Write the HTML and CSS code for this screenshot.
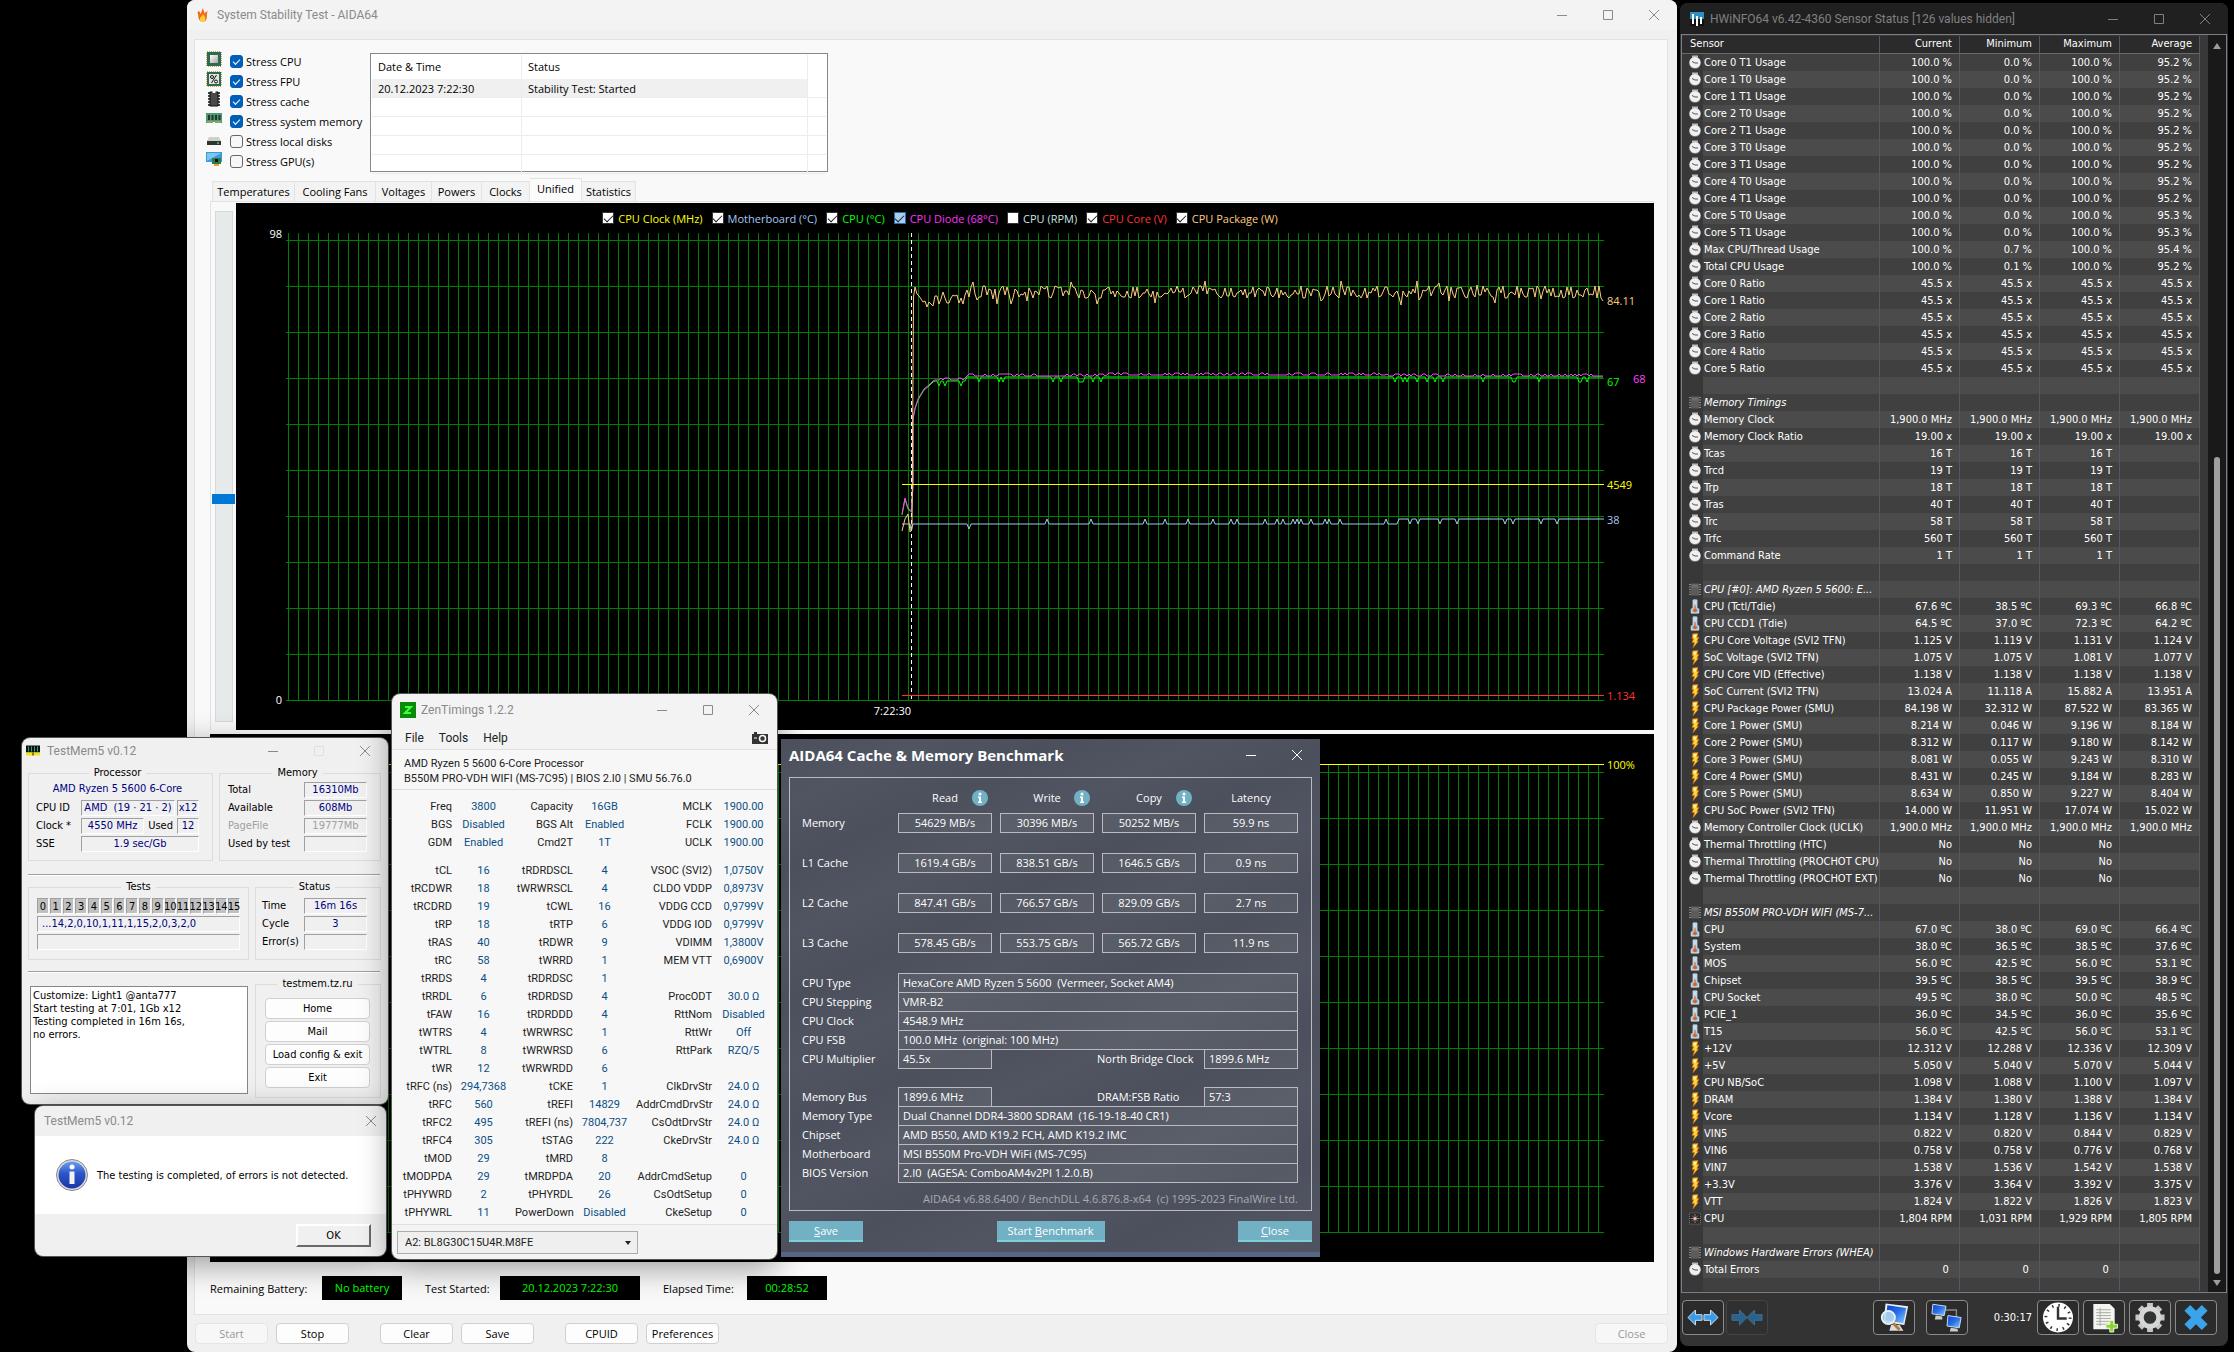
FILE: index.html
```html
<!DOCTYPE html>
<html lang="en">
<head>
  <meta charset="UTF-8" />
  <title>Stability test desktop</title>
  <link rel="stylesheet" href="styles.css">
</head>
<body>

  <!-- shared icons -->
  <svg class="defs" aria-hidden="true">
    <defs>
      <linearGradient id="screen" x1="0" y1="0" x2="1" y2="1">
        <stop offset="0" stop-color="#0a3fd0"/><stop offset="0.5" stop-color="#2a6fe8"/><stop offset="1" stop-color="#8fd0ff"/>
      </linearGradient>
      <linearGradient id="ball" x1="0" y1="0" x2="0" y2="1">
        <stop offset="0" stop-color="#6f9df0"/><stop offset="0.45" stop-color="#2a56c8"/><stop offset="1" stop-color="#1c35a8"/>
      </linearGradient>
      <linearGradient id="chipface" x1="0" y1="0" x2="1" y2="1">
        <stop offset="0" stop-color="#ffffff"/><stop offset="1" stop-color="#a9a9a9"/>
      </linearGradient>
    </defs>
    <symbol id="i-min" viewBox="0 0 10 10"><path d="M0 5.5h10" stroke="currentColor"/></symbol>
    <symbol id="i-max" viewBox="0 0 10 10"><path d="M.5.5h9v9h-9z" fill="none" stroke="currentColor"/></symbol>
    <symbol id="i-close" viewBox="0 0 10 10"><path d="M0 0l10 10M10 0L0 10" stroke="currentColor"/></symbol>
    <symbol id="i-clock" viewBox="0 0 12 14">
      <path d="M3 0h6v3H3z" fill="#bbb"/>
      <circle cx="6" cy="7.500" r="6" fill="#777"/><circle cx="6" cy="7" r="5.500" fill="#f0f0f0"/>
      <path d="M3 6l3 1.500h3" stroke="#555" fill="none"/>
    </symbol>
    <symbol id="i-chip" viewBox="0 0 12 14">
      <path d="M0 2h12M0 4.500h12M0 7h12M0 9.500h12M0 12h12" stroke="#8a8a8a"/>
      <path d="M2 1h8v12H2z" fill="#5c5c5c"/><path d="M3 2h6v3H3z" fill="#6e6e6e"/>
    </symbol>
    <symbol id="i-temp" viewBox="0 0 10 16">
      <path d="M3 1h4v8l2 2v4H1v-4l2-2z" fill="#8fc3e6" stroke="#dceef9"/>
      <path d="M4.500 2h1v6h-1z" fill="#fff"/><path d="M4.500 6h1v4h-1z" fill="#e3571b"/><circle cx="5" cy="12" r="2" fill="#ee5a12"/>
    </symbol>
    <symbol id="i-bolt" viewBox="1 0 10 16">
      <path d="M3.500 1L9 .5 8 5l2-.500-2 4.500h1.500L4 15.500 5.500 10H3l1.500-4H3z" fill="#ffd633" stroke="#d9731a" stroke-width=".8"/>
      <path d="M4.500 2h3l-1.500 4z" fill="#fff6c4"/>
    </symbol>
    <symbol id="i-fan" viewBox="0 0 12 12">
      <path d="M.5.5h11v11H.5z" fill="#2b2626" stroke="#777" stroke-dasharray="1 1"/>
      <path d="M6 1.500v9M1.500 6h9M3 3l6 6M9 3l-6 6" stroke="#8d7f7f"/><circle cx="6" cy="6" r="1.500" fill="#fbb"/>
    </symbol>
    <symbol id="i-info" viewBox="0 0 16 16">
      <circle cx="8" cy="8" r="8" fill="#72b1c4"/><circle cx="8" cy="4" r="1.500" fill="#fff"/>
      <path d="M6 6.500h3v5h1v1.500H6v-1.500h1V8H6z" fill="#fff"/>
    </symbol>
  </svg>

  <main class="desktop">

    <!-- AIDA64 System Stability Test -->
    <section class="aida">
      <header class="titlebar">
        <svg class="app-icon" viewBox="0 0 16 18"><path d="M2 4c2 1 3 2 3 4C6 6 6 3 8 0c0 3 2 4 2 7 1-1 2-2 4-3-1 2-1 4-1 7 0 4-2 7-5 7S2 15 2 11C2 8 1 7 1 6z" fill="#f26a1b"/><path d="M8 8c2 2 3 4 3 6s-1 4-3 4-4-2-4-4 2-3 4-6z" fill="#ffd02e"/></svg>
        <h1>System Stability Test - AIDA64</h1>
        <div class="win-buttons">
          <button aria-label="Minimize"><svg><use href="#i-min"/></svg></button>
          <button aria-label="Maximize"><svg><use href="#i-max"/></svg></button>
          <button aria-label="Close"><svg><use href="#i-close"/></svg></button>
        </div>
      </header>

      <div class="aida-panel">
        <div class="aida-top">
          <div class="stress">
            <label><svg viewBox="0 0 16 16"><path d="M1 1h14v14H1z" fill="none" stroke="#c5a75a" stroke-width="2" stroke-dasharray="1 1"/><path d="M1 1h14v14H1z" fill="#2f6b4f"/><path d="M4 4h8v8H4z" fill="url(#chipface)"/></svg><input type="checkbox" checked>Stress CPU</label>
            <label><svg viewBox="0 0 16 16"><path d="M1 1h14v14H1z" fill="none" stroke="#c5a75a" stroke-width="2" stroke-dasharray="1 1"/><path d="M1 1h14v14H1z" fill="#2f6b4f"/><path d="M3 3h10v10H3z" fill="#e4e4e4"/><circle cx="6" cy="6" r="1.500" fill="none" stroke="#111"/><circle cx="10" cy="10.500" r="1.500" fill="none" stroke="#111"/><path d="M10.500 4l-5 8" stroke="#111"/></svg><input type="checkbox" checked>Stress FPU</label>
            <label><svg viewBox="0 0 16 16"><path d="M2 2h12M2 5h12M2 8h12M2 11h12M2 14h12" stroke="#111" stroke-width="1.500"/><path d="M4 1h8v14H4z" fill="#4a4a4a" stroke="#111"/><path d="M6.500 0h3v2h-3z" fill="#f9f9f9"/></svg><input type="checkbox" checked>Stress cache</label>
            <label><svg viewBox="0 0 16 16"><path d="M0 2h16v10h-7v-1H7v1H0z" fill="#4f9a72"/><path d="M2 4h2v5H2zM5.500 4h2v5h-2zM9 4h2v5H9zM12.500 4h2v5h-2z" fill="#24352c"/><path d="M1 11h6M9 11h6" stroke="#c9b458"/></svg><input type="checkbox" checked>Stress system memory</label>
            <label><svg viewBox="0 0 16 16"><path d="M3 6h10l2 4H1z" fill="#cfcfcf"/><path d="M1 10h14v4H1z" fill="#333"/><path d="M11 12h2" stroke="#3be04a" stroke-width="1.500"/></svg><input type="checkbox">Stress local disks</label>
            <label><svg viewBox="0 0 16 16"><path d="M0 1h16v10H0z" fill="#3a9bdc"/><path d="M1 2h14L1 10z" fill="#7cc6f2"/><path d="M6 7h9v6H6z" fill="#2f7a4a"/><path d="M9 8h3v3H9z" fill="#111"/><path d="M8 13h5v2H8z" fill="#e8a51e"/></svg><input type="checkbox">Stress GPU(s)</label>
          </div>
          <div class="log">
            <table>
              <thead><tr><th>Date &amp; Time</th><th>Status</th><th></th></tr></thead>
              <tbody>
                <tr class="selected"><td>20.12.2023 7:22:30</td><td>Stability Test: Started</td><td></td></tr>
                <tr><td></td><td></td><td></td></tr>
                <tr><td></td><td></td><td></td></tr>
                <tr><td></td><td></td><td></td></tr>
                <tr><td></td><td></td><td></td></tr>
              </tbody>
            </table>
          </div>
        </div>

        <nav class="tabs">
          <button>Temperatures</button><button>Cooling Fans</button><button>Voltages</button><button>Powers</button><button>Clocks</button><button class="active">Unified</button><button>Statistics</button>
        </nav>

        <div class="graph-row">
          <input class="scale" type="range" min="0" max="1000" value="565" aria-label="Scale">
          <div class="graph">
            <svg id="unified" viewBox="0 0 1418 527"></svg>
            <div class="legend">
              <label class="c-yellow"><input type="checkbox" checked>CPU Clock (MHz)</label>
              <label class="c-blue"><input type="checkbox" checked>Motherboard (°C)</label>
              <label class="c-green"><input type="checkbox" checked>CPU (°C)</label>
              <label class="c-magenta"><input class="hot" type="checkbox" checked>CPU Diode (68°C)</label>
              <label class="c-pale"><input type="checkbox">CPU (RPM)</label>
              <label class="c-red"><input type="checkbox" checked>CPU Core (V)</label>
              <label class="c-sand"><input type="checkbox" checked>CPU Package (W)</label>
            </div>
          </div>
        </div>
        <div class="graph usage"><svg id="usage" viewBox="0 0 1444 528"></svg></div>

        <div class="test-info">
          <span>Remaining Battery:</span><output>No battery</output>
          <span>Test Started:</span><output>20.12.2023 7:22:30</output>
          <span>Elapsed Time:</span><output>00:28:52</output>
        </div>
      </div>

      <footer class="aida-buttons">
        <div><button disabled>Start</button><button>Stop</button></div>
        <div><button>Clear</button><button>Save</button></div>
        <div><button>CPUID</button><button>Preferences</button></div>
        <div class="end"><button disabled>Close</button></div>
      </footer>
    </section>

    <!-- HWiNFO64 sensors -->
    <section class="hwinfo">
      <header class="titlebar">
        <svg class="app-icon" viewBox="0 0 14 14"><path d="M0 0h14v7H0z" fill="#2f8fc4"/><path d="M0 7h14v7H0z" fill="#111"/><path d="M3 2v10M7 4v10M11 5v7" stroke="#fff" stroke-width="2"/></svg>
        <h1>HWiNFO64 v6.42-4360 Sensor Status [126 values hidden]</h1>
        <div class="win-buttons">
          <button aria-label="Minimize"><svg><use href="#i-min"/></svg></button>
          <button aria-label="Maximize"><svg><use href="#i-max"/></svg></button>
          <button aria-label="Close"><svg><use href="#i-close"/></svg></button>
        </div>
      </header>
      <div class="sensor-frame">
        <div class="sensor-list">
          <table class="sensors">
            <colgroup><col class="col-mark"><col><col class="col-value" span="4"></colgroup>
            <thead><tr><th colspan="2">Sensor</th><th>Current</th><th>Minimum</th><th>Maximum</th><th>Average</th></tr></thead>
            <tbody id="sensors"></tbody>
          </table>
        </div>
        <div class="scrollbar">
          <svg viewBox="0 0 8 6"><path d="M4 0l4 6H0z" fill="#9c9c9c"/></svg>
          <div class="track"><div class="thumb"></div></div>
          <svg viewBox="0 0 8 6"><path d="M0 0h8L4 6z" fill="#9c9c9c"/></svg>
        </div>
      </div>
      <footer class="toolbar">
        <div class="tools">
          <button aria-label="Expand columns"><svg viewBox="0 0 34 20"><path d="M1 10l8-8v5h7v6H9v5zM33 10l-8-8v5h-7v6h7v5z" fill="#3b9be6" stroke="#cfe8fb"/></svg></button>
          <button class="dim" aria-label="Shrink columns"><svg viewBox="0 0 34 20"><path d="M17 10L9 2v5H1v6h8v5zM17 10l8-8v5h8v6h-8v5z" fill="#2b628c" stroke="#3f7194"/></svg></button>
        </div>
        <div class="tools mid">
          <button aria-label="System summary"><svg viewBox="0 0 34 32"><path d="M8 1l24 3-4 20-22-3z" fill="#e9eef2"/><path d="M10 3l20 3-3 16-19-3z" fill="url(#screen)"/><path d="M14 24h9l4 6H12z" fill="#ddd"/><path d="M15 21l8 8" stroke="#b4793a" stroke-width="3"/><circle cx="11" cy="16" r="7" fill="#b9dcf2" fill-opacity=".85" stroke="#e8f2f8" stroke-width="2"/></svg></button>
          <button aria-label="Remote sensors"><svg viewBox="0 0 34 32"><path d="M16 8h11v10" fill="none" stroke="#888" stroke-width="1.500"/><path d="M2 2l14 2-2 10-13-2z" fill="url(#screen)" stroke="#cfe2f0"/><path d="M5 14l7 1v3H4z" fill="#ccc"/><path d="M18 14l14 2-2 11-13-2z" fill="url(#screen)" stroke="#cfe2f0"/><path d="M21 27l7 1 1 3h-9z" fill="#ccc"/></svg></button>
        </div>
        <span class="uptime">0:30:17</span>
        <div class="tools">
          <button aria-label="Reset clock"><svg viewBox="0 0 32 32"><circle cx="16" cy="16" r="15.500" fill="#fff"/><circle cx="16" cy="16" r="12.500" fill="none" stroke="#333" stroke-width="3" stroke-dasharray="1.500 5.040"/><path d="M16 5v12h9" fill="none" stroke="#333" stroke-width="2.500"/></svg></button>
          <button aria-label="Log to file"><svg viewBox="0 0 32 32"><path d="M5 2h17l5 5v21H5z" fill="#f4f4f0"/><path d="M8 8h15M8 11h15M8 14h15M8 17h15M8 20h15M8 23h12M12 6v19" stroke="#a9a9a0"/><path d="M22 19h4v4h4v4h-4v4h-4v-4h-4v-4h4z" fill="#8fcf3c" stroke="#e9f7cf"/></svg></button>
          <button aria-label="Settings"><svg viewBox="0 0 32 32"><path d="M16 1v30M1 16h30M5.500 5.500l21 21M26.500 5.500l-21 21" stroke="#c4c6c8" stroke-width="6"/><circle cx="16" cy="16" r="9" fill="#333" stroke="#d4d6d8" stroke-width="5"/></svg></button>
          <button aria-label="Close sensors"><svg viewBox="0 0 32 32"><path d="M4 9l6-6 6 6 6-6 6 6-7 7 7 7-6 6-6-6-6 6-6-6 7-7z" fill="#3aa3ea"/></svg></button>
        </div>
      </footer>
    </section>

    <!-- TestMem5 -->
    <section class="float testmem">
      <header class="titlebar">
        <svg class="app-icon" viewBox="0 0 14 11"><path d="M0 0h14v7H0z" fill="#111"/><path d="M2.500 1v5M5.500 1v5M8.500 1v5M11.500 1v5" stroke="#2fa36b"/><path d="M0 7h14v3H0z" fill="#f4e613"/><path d="M7 7v3" stroke="#111"/></svg>
        <h1>TestMem5 v0.12</h1>
        <div class="win-buttons">
          <button aria-label="Minimize"><svg><use href="#i-min"/></svg></button>
          <button aria-label="Maximize" disabled><svg><use href="#i-max"/></svg></button>
          <button aria-label="Close"><svg><use href="#i-close"/></svg></button>
        </div>
      </header>
      <div class="tm-body">
        <div class="tm-row">
          <fieldset class="tm-cpu">
            <legend>Processor</legend>
            <p>AMD Ryzen 5 5600 6-Core</p>
            <div><span>CPU ID</span><output>AMD&nbsp; (19 · 21 · 2)</output><output class="small">x12</output></div>
            <div><span>Clock *</span><output>4550 MHz</output><em>Used</em><output class="small">12</output></div>
            <div><span>SSE</span><output>1.9 sec/Gb</output></div>
          </fieldset>
          <fieldset class="tm-mem">
            <legend>Memory</legend>
            <div><span>Total</span><output>16310Mb</output></div>
            <div><span>Available</span><output>608Mb</output></div>
            <div class="off"><span>PageFile</span><output>19777Mb</output></div>
            <div><span>Used by test</span><output></output></div>
          </fieldset>
        </div>
        <hr>
        <div class="tm-row">
          <fieldset class="tm-tests">
            <legend>Tests</legend>
            <div class="numbers"><i>0</i><i>1</i><i>2</i><i>3</i><i>4</i><i>5</i><i>6</i><i>7</i><i>8</i><i>9</i><i>10</i><i>11</i><i>12</i><i>13</i><i>14</i><i>15</i></div>
            <div><output class="left">...14,2,0,10,1,11,1,15,2,0,3,2,0</output></div>
            <div><output></output></div>
          </fieldset>
          <fieldset class="tm-status">
            <legend>Status</legend>
            <div><span>Time</span><output>16m 16s</output></div>
            <div><span>Cycle</span><output>3</output></div>
            <div><span>Error(s)</span><output></output></div>
          </fieldset>
        </div>
        <hr>
        <div class="tm-row">
          <textarea aria-label="Test log">Customize: Light1 @anta777
Start testing at 7:01, 1Gb x12
Testing completed in 16m 16s,
no errors.</textarea>
          <fieldset class="tm-links">
            <legend>testmem.tz.ru</legend>
            <button>Home</button><button>Mail</button><button>Load config &amp; exit</button><button>Exit</button>
          </fieldset>
        </div>
      </div>
    </section>

    <!-- TestMem5 message -->
    <section class="float message">
      <header class="titlebar">
        <h1>TestMem5 v0.12</h1>
        <div class="win-buttons"><button aria-label="Close"><svg><use href="#i-close"/></svg></button></div>
      </header>
      <div class="message-text">
        <svg viewBox="0 0 32 32"><circle cx="16" cy="16" r="15.500" fill="#ddd" stroke="#888"/><circle cx="16" cy="16" r="13.500" fill="url(#ball)"/><circle cx="16" cy="8" r="2.500" fill="#fff"/><path d="M13.500 12.500h5V25h-5z" fill="#f2f2f2"/></svg>
        <p>The testing is completed, of errors is not detected.</p>
      </div>
      <footer><button>OK</button></footer>
    </section>

    <!-- ZenTimings -->
    <section class="float zen">
      <header class="titlebar">
        <svg class="app-icon" viewBox="0 0 16 16"><path d="M0 0h16v16H0z" fill="#0a8a0a"/><path d="M5 5h6L5 11h6" fill="none" stroke="#3dff3d" stroke-width="2"/></svg>
        <h1>ZenTimings 1.2.2</h1>
        <div class="win-buttons">
          <button aria-label="Minimize"><svg><use href="#i-min"/></svg></button>
          <button aria-label="Maximize"><svg><use href="#i-max"/></svg></button>
          <button aria-label="Close"><svg><use href="#i-close"/></svg></button>
        </div>
      </header>
      <nav class="zen-menu">
        <button>File</button><button>Tools</button><button>Help</button>
        <button class="camera" aria-label="Screenshot"><svg viewBox="0 0 16 12"><path d="M0 2h2V0h3v2h11v10H0z" fill="#333"/><circle cx="10.500" cy="6.500" r="3" fill="none" stroke="#fff" stroke-width="1.500"/><path d="M2 6h3" stroke="#fff"/></svg></button>
      </nav>
      <div class="zen-info">
        <p>AMD Ryzen 5 5600 6-Core Processor</p>
        <p>B550M PRO-VDH WIFI (MS-7C95) | BIOS 2.I0 | SMU 56.76.0</p>
      </div>
      <div class="zen-data"><table id="timings"></table></div>
      <footer>
        <label>
          <select aria-label="Module"><option>A2: BL8G30C15U4R.M8FE</option></select>
          <svg viewBox="0 0 6 4"><path d="M0 0h6L3 4z" fill="#222"/></svg>
        </label>
      </footer>
    </section>

    <!-- AIDA64 cache benchmark -->
    <section class="float bench">
      <header>
        <h1>AIDA64 Cache &amp; Memory Benchmark</h1>
        <button aria-label="Minimize"><svg><use href="#i-min"/></svg></button>
        <button aria-label="Close"><svg><use href="#i-close"/></svg></button>
      </header>
      <div class="bench-box">
        <table>
          <thead>
            <tr>
              <th></th>
              <th><div><span>Read</span><button aria-label="About read"><svg><use href="#i-info"/></svg></button></div></th>
              <th><div><span>Write</span><button aria-label="About write"><svg><use href="#i-info"/></svg></button></div></th>
              <th><div><span>Copy</span><button aria-label="About copy"><svg><use href="#i-info"/></svg></button></div></th>
              <th><div><span>Latency</span></div></th>
            </tr>
          </thead>
          <tbody>
            <tr><th>Memory</th><td><output>54629 MB/s</output></td><td><output>30396 MB/s</output></td><td><output>50252 MB/s</output></td><td><output>59.9 ns</output></td></tr>
            <tr><th>L1 Cache</th><td><output>1619.4 GB/s</output></td><td><output>838.51 GB/s</output></td><td><output>1646.5 GB/s</output></td><td><output>0.9 ns</output></td></tr>
            <tr><th>L2 Cache</th><td><output>847.41 GB/s</output></td><td><output>766.57 GB/s</output></td><td><output>829.09 GB/s</output></td><td><output>2.7 ns</output></td></tr>
            <tr><th>L3 Cache</th><td><output>578.45 GB/s</output></td><td><output>553.75 GB/s</output></td><td><output>565.72 GB/s</output></td><td><output>11.9 ns</output></td></tr>
          </tbody>
        </table>
        <div class="details">
          <div><span>CPU Type</span><output>HexaCore AMD Ryzen 5 5600&nbsp; (Vermeer, Socket AM4)</output></div>
          <div><span>CPU Stepping</span><output>VMR-B2</output></div>
          <div><span>CPU Clock</span><output>4548.9 MHz</output></div>
          <div><span>CPU FSB</span><output>100.0 MHz&nbsp; (original: 100 MHz)</output></div>
          <div><span>CPU Multiplier</span><output class="short">45.5x</output><b>North Bridge Clock</b><output class="short">1899.6 MHz</output></div>
        </div>
        <div class="details">
          <div><span>Memory Bus</span><output class="short">1899.6 MHz</output><b>DRAM:FSB Ratio</b><output class="short">57:3</output></div>
          <div><span>Memory Type</span><output>Dual Channel DDR4-3800 SDRAM&nbsp; (16-19-18-40 CR1)</output></div>
          <div><span>Chipset</span><output>AMD B550, AMD K19.2 FCH, AMD K19.2 IMC</output></div>
          <div><span>Motherboard</span><output>MSI B550M Pro-VDH WiFi (MS-7C95)</output></div>
          <div><span>BIOS Version</span><output>2.I0&nbsp; (AGESA: ComboAM4v2PI 1.2.0.B)</output></div>
        </div>
        <p class="copy">AIDA64 v6.88.6400 / BenchDLL 4.6.876.8-x64&nbsp; (c) 1995-2023 FinalWire Ltd.</p>
      </div>
      <footer>
        <button><u>S</u>ave</button>
        <button class="start">Start <u>B</u>enchmark</button>
        <button><u>C</u>lose</button>
      </footer>
    </section>

  </main>

  <script src="script.js"></script>
</body>
</html>
```
FILE: styles.css
```css
* {
  box-sizing: border-box;
}
body {
  margin: 0;
  background: #000;
  font-family: "Open Sans", "Noto Sans", sans-serif;
  font-size: 11px;
  color: #000;
}
h1, p {
  margin: 0;
}
button, input, select, textarea {
  font: inherit;
  color: inherit;
  margin: 0;
}
button {
  padding: 0;
}
.defs {
  position: absolute;
  width: 0;
  height: 0;
}
.desktop {
  position: relative;
  display: flex;
  gap: 3px;
  min-height: 100vh;
  padding: 0 6px 0 187px;
  overflow: hidden;
}

/* title bars */
.titlebar {
  display: flex;
  align-items: center;
  color: #8a8a8a;
}
.titlebar h1 {
  flex: 1;
  font: 12px/16px Roboto, sans-serif;
}
.app-icon {
  width: 14px;
  height: 14px;
  margin-right: 7px;
}
.win-buttons {
  display: flex;
  height: 100%;
}
.win-buttons button {
  width: 46px;
  height: 100%;
  border: 0;
  background: none;
  display: flex;
  align-items: center;
  justify-content: center;
}
.win-buttons svg {
  width: 10px;
  height: 10px;
}
.win-buttons button:disabled {
  color: #e0e0e0;
}

/* system stability test */
.aida {
  flex: 1;
  display: flex;
  flex-direction: column;
  background: #f0f0f0;
  border-radius: 8px;
}
.aida .titlebar {
  height: 30px;
  padding-left: 9px;
  background: #f3f3f3;
  border-radius: 8px 8px 0 0;
}
.aida-panel {
  flex: 1;
  display: flex;
  flex-direction: column;
  margin: 9px 9px 0 7px;
  padding: 11px 13px 0 15px;
  border: 1px solid #e2e2e2;
  background: #f9f9f9;
}
.aida-top {
  display: flex;
}
.stress {
  width: 160px;
  margin-left: -4px;
}
.stress label {
  display: flex;
  align-items: center;
  height: 20px;
  white-space: nowrap;
}
.stress svg {
  width: 16px;
  height: 16px;
  margin: 0 8px 4px 0;
}
.stress input {
  appearance: none;
  width: 13px;
  height: 13px;
  margin-right: 3px;
  border: 1px solid #666;
  border-radius: 3px;
  background: #f7f7f7;
}
.stress input:checked {
  border-color: #005fb8;
  background: #005fb8;
  display: grid;
  place-items: center;
}
.stress input:checked::before {
  content: "";
  width: 6px;
  height: 3px;
  border: solid #fff;
  border-width: 0 0 1px 1px;
  transform: rotate(-45deg);
}
.log {
  width: 458px;
  height: 119px;
  margin: 2px 0 0 4px;
  padding: 1px;
  border: 1px solid #828790;
  background: #fff;
}
.log table {
  width: 100%;
  table-layout: fixed;
  border-spacing: 0;
}
.log th, .log td {
  height: 19px;
  padding: 0 6px;
  border-right: 1px solid #ececec;
  border-bottom: 1px solid #ececec;
  text-align: left;
  font-weight: normal;
}
.log th {
  height: 24px;
  padding-bottom: 2px;
  border-bottom: 0;
}
.log th:nth-child(1) {
  width: 150px;
}
.log th:nth-child(2) {
  width: 286px;
}
.log th:last-child, .log td:last-child {
  border-right: 0;
}
.log .selected td:not(:last-child) {
  background: #f0f0f0;
}
.tabs {
  display: grid;
  grid-template-columns: 83px 81px 56px 50px 48px 52px 54px;
  align-items: end;
  height: 23px;
  margin-top: 6px;
  padding-left: 2px;
}
.tabs button {
  height: 20px;
  border: 1px solid #e2e2e2;
  border-left: 0;
  border-bottom: 0;
  background: #f3f3f3;
  white-space: nowrap;
}
.tabs button:first-child {
  border-left: 1px solid #e2e2e2;
}
.tabs .active {
  height: 23px;
  padding-bottom: 3px;
  background: #fbfbfb;
}
.graph-row {
  display: flex;
  border: solid #e2e2e2;
  border-width: 1px 0 0 1px;
  padding-top: 1px;
}
.scale {
  appearance: none;
  writing-mode: vertical-lr;
  width: 23px;
  height: 511px;
  margin: 8px 1px 0;
  background: none;
}
.scale::-webkit-slider-runnable-track {
  width: 18px;
  height: 100%;
  border: 1px solid #d6dada;
  background: #e7eaea;
}
.scale::-webkit-slider-thumb {
  appearance: none;
  width: 23px;
  height: 10px;
  margin-left: -4px;
  background: #0078d7;
}
.graph {
  position: relative;
  flex: 1;
  background: #000;
}
.graph svg {
  display: block;
  width: 100%;
}
.graph text {
  font: 11px "Open Sans", sans-serif;
}
.usage {
  margin-top: 4px;
}
.legend {
  position: absolute;
  top: 7px;
  left: 0;
  right: 10px;
  display: flex;
  justify-content: center;
  gap: 9px;
}
.legend label {
  display: flex;
  align-items: center;
  height: 16px;
  white-space: nowrap;
}
.legend input {
  appearance: none;
  display: grid;
  place-items: center;
  width: 12px;
  height: 12px;
  margin-right: 4px;
  border: 1px solid #333;
  background: #fff;
}
.legend input:checked::before {
  content: "";
  width: 8px;
  height: 4px;
  margin-top: -2px;
  border: solid #222;
  border-width: 0 0 1px 1px;
  transform: rotate(-45deg);
}
.legend .hot {
  background: #a9cdee;
  border-color: #2b6ca8;
}
.c-yellow { color: #ff0; }
.c-blue { color: #a6c8f0; }
.c-green { color: #0f0; }
.c-magenta { color: #f3f; }
.c-pale { color: #c8e6e0; }
.c-red { color: #f33; }
.c-sand { color: #ffcc80; }
.test-info {
  display: grid;
  grid-template-columns: 112px 80px 75px 140px 84px 80px;
  align-items: center;
  height: 52px;
  white-space: nowrap;
}
.test-info span:not(:first-child) {
  text-align: left;
}
.test-info {
  grid-template-columns: 112px 103px 75px 163px 84px 103px;
}
.test-info output {
  height: 24px;
  margin-right: 23px;
  background: #000;
  color: #0f0;
  text-align: center;
  line-height: 24px;
}
.aida-buttons {
  display: flex;
  gap: 31px;
  padding: 8px 9px 8px 8px;
}
.aida-buttons div {
  display: flex;
  gap: 8px;
}
.aida-buttons .end {
  margin-left: auto;
}
.aida-buttons button, .tm-links button {
  width: 73px;
  height: 21px;
  border: 1px solid #d0d0d0;
  border-radius: 4px;
  background: #fdfdfd;
}
.aida-buttons button:disabled {
  border-color: #e5e5e5;
  background: #f7f7f7;
  color: #999;
}

/* sensor status */
.hwinfo {
  width: 548px;
  margin: 3px 0 6px;
  display: flex;
  flex-direction: column;
  background: #333;
  border-radius: 8px;
  color: #fff;
  font-family: "DejaVu Sans Condensed", sans-serif;
}
.hwinfo .titlebar {
  height: 31px;
  padding-left: 10px;
  background: #202020;
  border-radius: 8px 8px 0 0;
  color: #808080;
}
.hwinfo .app-icon {
  margin-right: 6px;
}
.sensor-frame {
  flex: 1;
  display: flex;
  margin: 0 1px;
  border: 1px solid #7b7f8c;
  background: #383838;
}
.sensor-list {
  flex: 1;
  padding: 1px 8px 0 0;
}
.sensors {
  width: 100%;
  table-layout: fixed;
  border-spacing: 0;
}
.col-mark {
  width: 21px;
}
.col-value {
  width: 80px;
}
.sensors th, .sensors td {
  height: 17px;
  padding: 0 7px 0 0;
  border-right: 1px solid #535865;
  font-weight: normal;
  text-align: right;
  line-height: 16px;
  white-space: nowrap;
}
.sensors thead th {
  height: 18px;
  padding-bottom: 1px;
  border-bottom: 1px solid #6a6a6a;
  background: #2b2b2b;
}
.sensors thead th:first-child {
  padding-left: 8px;
  text-align: left;
}
.sensors tr > .mark {
  padding: 0 0 0 7px;
  border-right: 0;
  background: #383838;
  text-align: left;
}
.sensors .mark svg {
  display: block;
  width: 12px;
  height: 15px;
}
.sensors tbody th {
  padding: 0 0 0 1px;
  text-align: left;
  overflow: hidden;
  text-overflow: ellipsis;
}
.sensors tbody tr:nth-child(odd) {
  background: #404040;
}
.sensors tbody tr:nth-child(even) {
  background: #4b4b4b;
}
.sensors tbody .group {
  background: #353535;
  font-style: italic;
}
.sensors tbody .rest {
  background: none;
}
.sensors .rest td {
  height: 13px;
}
.scrollbar {
  width: 18px;
  display: flex;
  flex-direction: column;
  align-items: center;
  padding: 8px 0 6px;
  background: #191919;
}
.scrollbar svg {
  width: 8px;
  height: 6px;
}
.track {
  flex: 1;
  width: 6px;
  display: flex;
  align-items: flex-end;
  padding: 5px 0 6px;
}
.thumb {
  width: 6px;
  height: 67%;
  border-radius: 3px;
  background: #9f9f9f;
}
.toolbar {
  display: flex;
  align-items: center;
  height: 53px;
  padding: 0 11px 5px 2px;
}
.tools {
  display: flex;
  gap: 4px;
}
.tools.mid {
  margin-left: auto;
  gap: 11px;
}
.tools button {
  width: 42px;
  height: 35px;
  border: 1px solid #8a8a8a;
  border-radius: 4px;
  background: #2b2b2b;
  display: grid;
  place-items: center;
}
.tools .dim {
  margin-left: -2px;
  border-color: #444;
  background: #303030;
}
.tools svg {
  width: 32px;
  height: 31px;
}
.uptime {
  margin: 0 5px 0 26px;
}

/* floating windows */
.float {
  position: absolute;
  display: flex;
  flex-direction: column;
  background: #f0f0f0;
}
.testmem, .message, .zen {
  border-radius: 8px;
  box-shadow: 0 0 0 1px #555, 0 8px 32px rgba(0, 0, 0, 0.4);
}
.testmem {
  left: 22px;
  top: 738px;
  width: 366px;
  padding-bottom: 6px;
  font-family: "DejaVu Sans Condensed", sans-serif;
}
.testmem .titlebar {
  height: 25px;
  padding-left: 4px;
}
.tm-body {
  padding: 3px 7px 0 6px;
}
.tm-row {
  display: flex;
  justify-content: space-between;
}
.testmem fieldset {
  display: flex;
  flex-direction: column;
  gap: 2px;
  min-width: 0;
  margin: 0;
  border: 1px solid #dcdcdc;
}
.testmem legend {
  margin: 0 auto;
  padding: 0 5px;
  line-height: 14px;
}
.testmem fieldset div {
  display: flex;
  gap: 2px;
  height: 16px;
  line-height: 15px;
  white-space: nowrap;
}
.testmem output {
  flex: 1;
  height: 16px;
  border: 1px solid;
  border-color: #a0a0a0 #fff #fff #a0a0a0;
  color: #000080;
  text-align: center;
  line-height: 13px;
}
.testmem hr {
  height: 2px;
  margin: 13px 1px 4px 0;
  border: solid;
  border-color: #a0a0a0 #fff #fff;
  border-width: 1px 0;
}
.testmem hr + .tm-row + hr {
  margin-top: 11px;
}
.testmem em {
  font-style: normal;
  padding: 0 2px;
}
.testmem output.small {
  flex: 0 0 22px;
}
.testmem output.left {
  padding-left: 4px;
  text-align: left;
}
.testmem .tm-cpu {
  width: 185px;
  padding: 0 13px 8px 7px;
}
.tm-cpu p {
  height: 18px;
  color: #000080;
  text-align: center;
  line-height: 18px;
}
.tm-cpu span {
  width: 43px;
}
.testmem .tm-mem {
  width: 162px;
  padding: 2px 13px 8px 8px;
}
.tm-mem span {
  width: 74px;
}
.tm-mem .off, .tm-mem .off output {
  color: #a0a0a0;
}
.testmem .tm-tests {
  width: 221px;
  padding: 4px 8px 9px;
}
.numbers i {
  flex: 1 0 0;
  width: 0;
  background: #c0c0c0;
  border: 1px solid;
  border-color: #a0a0a0 #fff #fff #a0a0a0;
  font-style: normal;
  display: flex;
  justify-content: center;
}
.testmem .numbers {
  gap: 1px;
}
.testmem .tm-status {
  width: 126px;
  padding: 4px 13px 9px 6px;
}
.tm-status span {
  width: 40px;
}
.testmem textarea {
  width: 218px;
  height: 108px;
  margin: 9px 0 0 2px;
  padding: 2px;
  border: 1px solid #828790;
  background: #fff;
  line-height: 13px;
  resize: none;
}
.testmem .tm-links {
  width: 126px;
  padding: 7px 10px 9px 9px;
}
.tm-links button {
  width: 100%;
}

.message {
  left: 35px;
  top: 1106px;
  width: 351px;
  font-family: "DejaVu Sans Condensed", sans-serif;
}
.message .titlebar {
  height: 30px;
  padding-left: 9px;
}
.message .win-buttons button {
  width: 30px;
}
.message-text {
  display: flex;
  align-items: center;
  gap: 9px;
  height: 78px;
  padding: 0 21px;
  background: #fff;
}
.message-text svg {
  width: 32px;
  height: 32px;
}
.message footer {
  padding: 10px 15px 9px;
  text-align: right;
}
.message footer button {
  width: 75px;
  height: 23px;
  border: 2px solid;
  border-color: #fff #696969 #696969 #fff;
  background: #f0f0f0;
}

.zen {
  left: 392px;
  top: 694px;
  width: 385px;
  background: #f3f3f3;
  color: #222;
  font-family: Roboto, sans-serif;
}
.zen .titlebar {
  height: 31px;
  padding-left: 8px;
}
.zen .app-icon {
  width: 16px;
  height: 16px;
  margin-right: 5px;
}
.zen-menu {
  display: flex;
  align-items: center;
  gap: 15px;
  height: 25px;
  padding: 1px 9px 0 13px;
  border-bottom: 1px solid #e0e0e0;
  font-size: 12px;
}
.zen-menu button {
  border: 0;
  background: none;
}
.zen-menu .camera {
  display: flex;
  margin-left: auto;
}
.camera svg {
  width: 16px;
  height: 12px;
}
.zen-info {
  padding: 6px 12px 3px;
  border-bottom: 1px solid #e0e0e0;
  background: #f7f7f7;
  line-height: 15px;
}
.zen-data {
  padding: 7px 2px 3px 0;
  border-bottom: 1px solid #e0e0e0;
  background: #f7f7f7;
}
.zen-data table {
  width: 100%;
  table-layout: fixed;
  border-spacing: 0;
}
.zen-data td, .zen-data th {
  width: 63px;
  height: 18px;
  padding: 0;
  color: #0b4f86;
  text-align: center;
  white-space: nowrap;
}
.zen-data th {
  width: 60px;
  color: #222;
  font-weight: normal;
  text-align: right;
}
.zen-data th:nth-child(3) {
  width: 58px;
}
.zen-data th:nth-child(5) {
  width: 76px;
}
.zen-data .gap td {
  height: 10px;
}
.zen footer {
  padding: 6px 5px 5px;
}
.zen footer label {
  position: relative;
  display: block;
  width: 241px;
}
.zen select {
  appearance: none;
  display: block;
  width: 100%;
  height: 23px;
  padding: 0 7px;
  border: 1px solid #adadad;
  border-radius: 0;
  background: #efefef;
}
.zen footer svg {
  position: absolute;
  top: 10px;
  right: 7px;
  width: 6px;
  height: 4px;
}

.bench {
  left: 781px;
  top: 739px;
  width: 539px;
  padding: 0 8px 10px;
  border-bottom: 5px solid #566684;
  background: repeating-linear-gradient(155deg, #4b505c 0, #505561 60px, #4b505c 120px);
  color: #fff;
}
.bench header {
  display: flex;
  align-items: center;
  height: 38px;
  padding-bottom: 6px;
}
.bench h1 {
  flex: 1;
  font-size: 15px;
  line-height: 20px;
}
.bench header button {
  width: 46px;
  height: 30px;
  border: 0;
  background: none;
}
.bench header button:last-child {
  margin-right: -8px;
}
.bench header svg {
  width: 10px;
  height: 10px;
}
.bench-box {
  padding: 0 13px 2px 12px;
  border: 1px solid #b9bbc0;
}
.bench table {
  width: 100%;
  table-layout: fixed;
  border-spacing: 0;
}
.bench th, .bench td {
  width: 102px;
  height: 40px;
  padding: 0 0 0 8px;
  font-weight: normal;
  line-height: 20px;
  vertical-align: top;
}
.bench tr > th:first-child {
  width: auto;
  padding-left: 0;
  text-align: left;
}
.bench thead th {
  height: 35px;
  padding-top: 10px;
}
.bench thead div {
  display: grid;
  grid-template-columns: 1fr auto 1fr;
  align-items: center;
}
.bench thead span {
  grid-column: 2;
}
.bench thead button {
  display: flex;
  justify-self: end;
  margin-right: 4px;
  border: 0;
  background: none;
}
.bench thead svg {
  width: 16px;
  height: 16px;
}
.bench output {
  display: block;
  height: 20px;
  border: 1px solid #b9bbc0;
  background: rgba(255, 255, 255, 0.06);
  line-height: 17px;
  text-align: center;
}
.details {
  margin-bottom: 19px;
}
.details div {
  display: flex;
  height: 19px;
  line-height: 19px;
}
.details span {
  width: 96px;
}
.details output {
  flex: 1;
  padding-left: 4px;
  text-align: left;
}
.details .short {
  flex: 0 0 94px;
}
.details b {
  flex: 1;
  padding-left: 105px;
  font-weight: normal;
}
.copy {
  margin-top: -11px;
  color: #a9abb0;
  line-height: 18px;
  text-align: right;
}
.bench footer {
  display: flex;
  justify-content: space-between;
  padding-top: 10px;
}
.bench footer button {
  width: 74px;
  height: 21px;
  border: 0;
  border-bottom: 2px solid #7fcfd8;
  background: #72b1c4;
}
.bench footer .start {
  width: 108px;
}
```
FILE: script.js
```js
// sensor rows: icon | name | current | minimum | maximum | average
const SENSORS = [];
const add = (icon, name, ...v) => SENSORS.push([icon, name, ...v]);
const blank = () => SENSORS.push(['', '']);

['0 T1', '1 T0', '1 T1', '2 T0', '2 T1', '3 T0', '3 T1', '4 T0', '4 T1'].forEach(c =>
  add('clock', `Core ${c} Usage`, '100.0 %', '0.0 %', '100.0 %', '95.2 %'));
add('clock', 'Core 5 T0 Usage', '100.0 %', '0.0 %', '100.0 %', '95.3 %');
add('clock', 'Core 5 T1 Usage', '100.0 %', '0.0 %', '100.0 %', '95.3 %');
add('clock', 'Max CPU/Thread Usage', '100.0 %', '0.7 %', '100.0 %', '95.4 %');
add('clock', 'Total CPU Usage', '100.0 %', '0.1 %', '100.0 %', '95.2 %');
for (let i = 0; i < 6; i++) add('clock', `Core ${i} Ratio`, '45.5 x', '45.5 x', '45.5 x', '45.5 x');
blank();
add('chip', 'Memory Timings');
add('clock', 'Memory Clock', '1,900.0 MHz', '1,900.0 MHz', '1,900.0 MHz', '1,900.0 MHz');
add('clock', 'Memory Clock Ratio', '19.00 x', '19.00 x', '19.00 x', '19.00 x');
[['Tcas', 16], ['Trcd', 19], ['Trp', 18], ['Tras', 40], ['Trc', 58], ['Trfc', 560], ['Command Rate', 1]].forEach(([n, t]) =>
  add('clock', n, `${t} T`, `${t} T`, `${t} T`));
blank();
add('chip', 'CPU [#0]: AMD Ryzen 5 5600: E...');
add('temp', 'CPU (Tctl/Tdie)', '67.6 ºC', '38.5 ºC', '69.3 ºC', '66.8 ºC');
add('temp', 'CPU CCD1 (Tdie)', '64.5 ºC', '37.0 ºC', '72.3 ºC', '64.2 ºC');
add('bolt', 'CPU Core Voltage (SVI2 TFN)', '1.125 V', '1.119 V', '1.131 V', '1.124 V');
add('bolt', 'SoC Voltage (SVI2 TFN)', '1.075 V', '1.075 V', '1.081 V', '1.077 V');
add('bolt', 'CPU Core VID (Effective)', '1.138 V', '1.138 V', '1.138 V', '1.138 V');
add('bolt', 'SoC Current (SVI2 TFN)', '13.024 A', '11.118 A', '15.882 A', '13.951 A');
add('bolt', 'CPU Package Power (SMU)', '84.198 W', '32.312 W', '87.522 W', '83.365 W');
add('bolt', 'Core 1 Power (SMU)', '8.214 W', '0.046 W', '9.196 W', '8.184 W');
add('bolt', 'Core 2 Power (SMU)', '8.312 W', '0.117 W', '9.180 W', '8.142 W');
add('bolt', 'Core 3 Power (SMU)', '8.081 W', '0.055 W', '9.243 W', '8.310 W');
add('bolt', 'Core 4 Power (SMU)', '8.431 W', '0.245 W', '9.184 W', '8.283 W');
add('bolt', 'Core 5 Power (SMU)', '8.634 W', '0.850 W', '9.227 W', '8.404 W');
add('bolt', 'CPU SoC Power (SVI2 TFN)', '14.000 W', '11.951 W', '17.074 W', '15.022 W');
add('clock', 'Memory Controller Clock (UCLK)', '1,900.0 MHz', '1,900.0 MHz', '1,900.0 MHz', '1,900.0 MHz');
['HTC', 'PROCHOT CPU', 'PROCHOT EXT'].forEach(n => add('clock', `Thermal Throttling (${n})`, 'No', 'No', 'No'));
blank();
add('chip', 'MSI B550M PRO-VDH WIFI (MS-7...');
add('temp', 'CPU', '67.0 ºC', '38.0 ºC', '69.0 ºC', '66.4 ºC');
add('temp', 'System', '38.0 ºC', '36.5 ºC', '38.5 ºC', '37.6 ºC');
add('temp', 'MOS', '56.0 ºC', '42.5 ºC', '56.0 ºC', '53.1 ºC');
add('temp', 'Chipset', '39.5 ºC', '38.5 ºC', '39.5 ºC', '38.9 ºC');
add('temp', 'CPU Socket', '49.5 ºC', '38.0 ºC', '50.0 ºC', '48.5 ºC');
add('temp', 'PCIE_1', '36.0 ºC', '34.5 ºC', '36.0 ºC', '35.6 ºC');
add('temp', 'T15', '56.0 ºC', '42.5 ºC', '56.0 ºC', '53.1 ºC');
add('bolt', '+12V', '12.312 V', '12.288 V', '12.336 V', '12.309 V');
add('bolt', '+5V', '5.050 V', '5.040 V', '5.070 V', '5.044 V');
add('bolt', 'CPU NB/SoC', '1.098 V', '1.088 V', '1.100 V', '1.097 V');
add('bolt', 'DRAM', '1.384 V', '1.380 V', '1.388 V', '1.384 V');
add('bolt', 'Vcore', '1.134 V', '1.128 V', '1.136 V', '1.134 V');
add('bolt', 'VIN5', '0.822 V', '0.820 V', '0.844 V', '0.829 V');
add('bolt', 'VIN6', '0.758 V', '0.758 V', '0.776 V', '0.768 V');
add('bolt', 'VIN7', '1.538 V', '1.536 V', '1.542 V', '1.538 V');
add('bolt', '+3.3V', '3.376 V', '3.364 V', '3.392 V', '3.375 V');
add('bolt', 'VTT', '1.824 V', '1.822 V', '1.826 V', '1.823 V');
add('fan', 'CPU', '1,804 RPM', '1,031 RPM', '1,929 RPM', '1,805 RPM');
blank();
add('chip', 'Windows Hardware Errors (WHEA)');
add('clock', 'Total Errors', '0&nbsp;', '0&nbsp;', '0&nbsp;');

document.getElementById('sensors').innerHTML = SENSORS.map(([icon, name, ...v]) => {
  const mark = icon ? `<svg><use href="#i-${icon}"/></svg>` : '';
  const cells = [0, 1, 2, 3].map(i => `<td>${v[i] || ''}</td>`).join('');
  return `<tr class="${icon === 'chip' ? 'group' : ''}"><td class="mark">${mark}</td><th>${name}</th>${cells}</tr>`;
}).join('') + '<tr class="rest"><td class="mark"></td><td></td><td></td><td></td><td></td><td></td></tr>';

// memory timings, three label / value pairs per line
const TIMINGS = `Freq|3800|Capacity|16GB|MCLK|1900.00
BGS|Disabled|BGS Alt|Enabled|FCLK|1900.00
GDM|Enabled|Cmd2T|1T|UCLK|1900.00
-
tCL|16|tRDRDSCL|4|VSOC (SVI2)|1,0750V
tRCDWR|18|tWRWRSCL|4|CLDO VDDP|0,8973V
tRCDRD|19|tCWL|16|VDDG CCD|0,9799V
tRP|18|tRTP|6|VDDG IOD|0,9799V
tRAS|40|tRDWR|9|VDIMM|1,3800V
tRC|58|tWRRD|1|MEM VTT|0,6900V
tRRDS|4|tRDRDSC|1||
tRRDL|6|tRDRDSD|4|ProcODT|30.0 Ω
tFAW|16|tRDRDDD|4|RttNom|Disabled
tWTRS|4|tWRWRSC|1|RttWr|Off
tWTRL|8|tWRWRSD|6|RttPark|RZQ/5
tWR|12|tWRWRDD|6||
tRFC (ns)|294,7368|tCKE|1|ClkDrvStr|24.0 Ω
tRFC|560|tREFI|14829|AddrCmdDrvStr|24.0 Ω
tRFC2|495|tREFI (ns)|7804,737|CsOdtDrvStr|24.0 Ω
tRFC4|305|tSTAG|222|CkeDrvStr|24.0 Ω
tMOD|29|tMRD|8||
tMODPDA|29|tMRDPDA|20|AddrCmdSetup|0
tPHYWRD|2|tPHYRDL|26|CsOdtSetup|0
tPHYWRL|11|PowerDown|Disabled|CkeSetup|0`;
document.getElementById('timings').innerHTML = TIMINGS.split('\n').map(line => {
  if (line === '-') return '<tr class="gap"><td colspan="6"></td></tr>';
  return '<tr>' + line.split('|').map((t, i) => i % 2 ? `<td>${t}</td>` : `<th>${t}</th>`).join('') + '</tr>';
}).join('');

// graphs
let seed = 7;
function rnd() {
  seed = (seed * 16807) % 2147483647;
  return seed / 2147483647;
}
function grid(x0, first, x1, top, y0, y1) {
  let d = '';
  for (let x = first; x < x1; x += 10) d += `M${x} ${top}V${y1}`;
  for (let y = y0; y <= y1; y += 46) d += `M${x0} ${y}H${x1}`;
  return `<path d="${d}" stroke="#008000" fill="none"/>`;
}
function line(points, color) {
  return `<polyline points="${points.map(p => p.join()).join(' ')}" fill="none" stroke="${color}"/>`;
}
function label(x, y, text, color, anchor = 'start') {
  return `<text x="${x}" y="${y}" fill="${color}" text-anchor="${anchor}">${text}</text>`;
}

const END = 1368;
const power = [[666, 328], [669, 316], [672, 311], [674, 329], [676, 326], [677.5, 94]];
for (let x = 679; x <= END; x += 2) {
  const base = x < 730 ? 95 : 89;
  let y = base + (rnd() - 0.5) * 13;
  if (rnd() > 0.92) y -= 5;
  if (rnd() > 0.9) y += 7;
  power.push([x, Math.round(y)]);
}
const warm = [[666, 311], [669, 295], [672, 305], [675.5, 308], [677, 281], [677, 215], [679, 205], [682, 196], [688, 186], [693, 182], [697, 178]];
const diode = warm.map(p => p.slice());
const cpu = warm.map(p => [p[0], p[1] + 1]);
for (let x = 699; x <= END; x += 2) {
  const base = x < 730 ? 178 : 174;
  const quiet = x > 870 && x < 1150;
  cpu.push([x, base + (!quiet && rnd() > 0.87 ? 5 : 0)]);
  diode.push([x, base - (quiet ? 2 : 1) - (rnd() > 0.6 ? 2 : 0)]);
}
const board = [[666, 321], [674, 321], [675, 327], [677, 321]];
const spike = (x, y, dy) => board.push([x - 2, y], [x, y + dy], [x + 2, y]);
spike(733, 321, 5);
[811, 855, 909, 929, 952, 977, 995, 1001, 1029, 1041, 1047, 1057, 1061, 1065, 1075, 1089, 1093, 1104, 1150].forEach(x => spike(x, 321, -5));
board.push([1161, 321], [1163, 316]);
[1174, 1182, 1204, 1221, 1269, 1277, 1305, 1321].forEach(x => spike(x, 316, 5));
board.push([END, 316]);

document.getElementById('unified').innerHTML =
  grid(50, 52.5, END, 30, 37.5, 497.5) +
  '<path d="M675.5 30V497" stroke="#fff" stroke-dasharray="4 3"/>' +
  line(board, '#a6c8f0') + line(cpu, '#00ff00') + line(diode, '#ff40ff') +
  line(power, '#ffcc80') +
  line([[666, 281.5], [END, 281.5]], '#ffff00') +
  line([[666, 492.5], [END, 492.5]], '#ff3333') +
  label(46, 35, '98', '#fff', 'end') + label(46, 501, '0', '#fff', 'end') +
  label(675, 512, '7:22:30', '#fff', 'end') +
  label(1371, 102, '84.11', '#ffcc80') + label(1371, 183, '67', '#00ff00') + label(1397, 180, '68', '#ff40ff') +
  label(1371, 286, '4549', '#ffff00') + label(1371, 321, '38', '#a6c8f0') + label(1371, 497, '1.134', '#ff3333');

document.getElementById('usage').innerHTML =
  grid(52, 58.5, 1394, 30, 38.5, 498.5) +
  line([[52, 30.5], [1394, 30.5]], '#ffff00') +
  label(1397, 35, '100%', '#ffff00');
```
